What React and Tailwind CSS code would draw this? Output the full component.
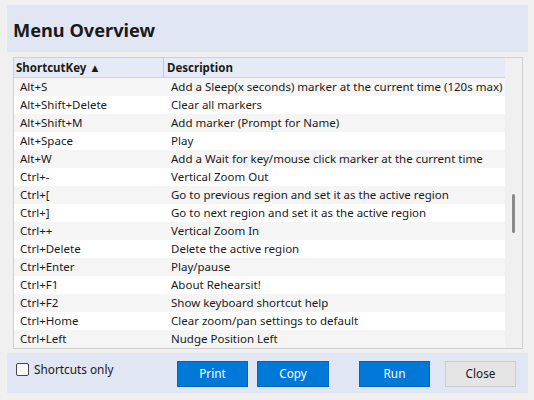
const rows = [
  ["Alt+S", "Add a Sleep(x seconds) marker at the current time (120s max)"],
  ["Alt+Shift+Delete", "Clear all markers"],
  ["Alt+Shift+M", "Add marker (Prompt for Name)"],
  ["Alt+Space", "Play"],
  ["Alt+W", "Add a Wait for key/mouse click marker at the current time"],
  ["Ctrl+-", "Vertical Zoom Out"],
  ["Ctrl+[", "Go to previous region and set it as the active region"],
  ["Ctrl+]", "Go to next region and set it as the active region"],
  ["Ctrl++", "Vertical Zoom In"],
  ["Ctrl+Delete", "Delete the active region"],
  ["Ctrl+Enter", "Play/pause"],
  ["Ctrl+F1", "About Rehearsit!"],
  ["Ctrl+F2", "Show keyboard shortcut help"],
  ["Ctrl+Home", "Clear zoom/pan settings to default"],
  ["Ctrl+Left", "Nudge Position Left"],
];

export default function App() {
  return (
    <div
      className="w-[534px] h-[400px] bg-[#f0f0f0] pt-[5px] pl-[7px] text-[#1a1a1a]"
      style={{ fontFamily: '"Noto Sans", "Open Sans", sans-serif' }}
    >
      <div className="w-[521px] h-[388px] bg-[#e1e6f4] flex flex-col">
        {/* title */}
        <div className="h-[47px] pl-[6px] flex items-center">
          <h1 className="text-[18.2px] font-bold leading-none pt-[4px]">Menu Overview</h1>
        </div>

        {/* grid */}
        <div className="bg-[#f0f0f0] px-[6px] pt-[5px] pb-[4px]">
          <div className="w-[510px] h-[292px] border border-[#cfcfcf] flex bg-white">
            <div className="flex-1 min-w-0 flex flex-col text-[11.5px]">
              <div className="h-[20px] flex bg-[#e6eaf6] border-b border-[#d4d4d4] font-bold">
                <div className="w-[150px] border-r border-[#c8c8c8] pl-[2px] flex items-center">
                  ShortcutKey ▲
                </div>
                <div className="flex-1 pl-[3px] flex items-center">Description</div>
              </div>
              {rows.map(([key, desc], i) => (
                <div
                  key={key}
                  className={`h-[18px] flex items-center ${i % 2 === 0 ? "bg-[#f5f5f5]" : "bg-white"}`}
                >
                  <div className="w-[150px] shrink-0 pl-[6px] whitespace-nowrap">{key}</div>
                  <div className="flex-1 min-w-0 pl-[7px] whitespace-nowrap overflow-hidden">{desc}</div>
                </div>
              ))}
            </div>
            <div className="w-[17px] shrink-0 bg-[#f0f0f0] flex justify-center pt-[136px]">
              <div className="w-[3px] h-[39px] rounded-full bg-[#8a8a8a]" />
            </div>
          </div>
        </div>

        {/* footer */}
        <div className="flex-1 flex items-start pt-[8px] text-[11.8px]">
          <label className="flex items-center gap-[5px] pl-[9px] w-[170px]">
            <span className="w-[13px] h-[13px] border border-[#444] rounded-[2px] bg-white" />
            <span>Shortcuts only</span>
          </label>
          <button className="w-[71px] h-[26px] bg-[#0078d7] border border-[#0067c0] text-white">Print</button>
          <button className="w-[72px] h-[26px] bg-[#0078d7] border border-[#0067c0] text-white ml-[9px]">Copy</button>
          <button className="w-[71px] h-[26px] bg-[#0078d7] border border-[#0067c0] text-white ml-[30px]">Run</button>
          <button className="w-[71px] h-[26px] bg-[#e5e5e5] border border-[#cccccc] ml-[15px]">Close</button>
        </div>
      </div>
    </div>
  );
}
